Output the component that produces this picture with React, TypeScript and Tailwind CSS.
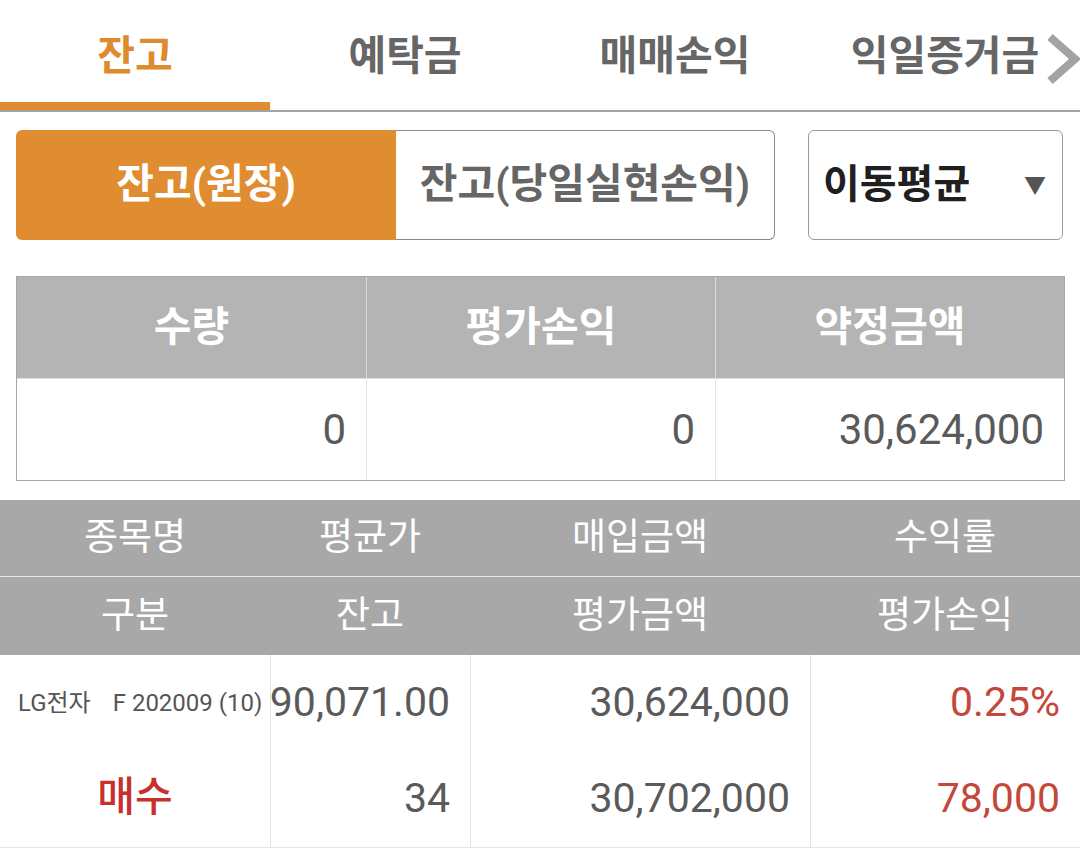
import React from "react";

const TABS = ["잔고", "예탁금", "매매손익", "익일증거금"];

const SUMMARY = [
  { label: "수량", value: "0" },
  { label: "평가손익", value: "0" },
  { label: "약정금액", value: "30,624,000" },
];

const COLS = "grid grid-cols-[270px_200px_340px_270px]";

export default function App() {
  return (
    <div className="w-[1080px] h-[856px] overflow-hidden bg-white font-['Roboto','Noto_Sans_CJK_KR',sans-serif]">
      {/* Top tabs */}
      <div className="relative flex h-[112px] border-b-2 border-[#a3a3a3]">
        {TABS.map((t, i) => (
          <div key={t} className="flex w-[270px] flex-col">
            <div
              className={
                i === 0
                  ? "flex flex-1 items-center justify-center pt-[12px] text-[41px] font-bold text-[#dc8b2e]"
                  : "flex flex-1 items-center justify-center pt-[12px] text-[41px] font-bold text-[#666666]"
              }
            >
              {t}
            </div>
            <div className={i === 0 ? "h-[8px] bg-[#df8d30]" : "h-[8px]"} />
          </div>
        ))}
        <svg
          className="absolute right-0 top-[33px] h-[52px] w-[34px]"
          viewBox="0 0 34 52"
        >
          <path d="M4 4 L29 26 L4 48" fill="none" stroke="#a3a3a3" strokeWidth="8" />
        </svg>
      </div>

      {/* Segment + dropdown */}
      <div className="mt-[18px] flex h-[110px] px-[16px]">
        <div className="flex w-[759px]">
          <div className="flex w-[380px] items-center justify-center rounded-l-[6px] bg-[#df8d30] text-[41px] font-bold text-white">
            잔고(원장)
          </div>
          <div className="flex flex-1 items-center justify-center rounded-r-[6px] border border-l-0 border-[#8a8a8a] text-[41px] font-semibold text-[#666666]">
            잔고(당일실현손익)
          </div>
        </div>
        <div className="ml-[33px] flex w-[255px] items-center justify-between rounded-[6px] border border-[#9a9a9a] pl-[14px] pr-[16px]">
          <span className="text-[40px] font-bold text-[#1f1f1f]">이동평균</span>
          <span className="text-[22px] text-[#555555]">▼</span>
        </div>
      </div>

      {/* Summary table */}
      <div className="ml-[16px] mt-[36px] w-[1049px] border border-[#a6a6a6]">
        <div className="grid h-[101px] grid-cols-3 bg-[#b4b4b4]">
          {SUMMARY.map((s, i) => (
            <div
              key={s.label}
              className={
                i === 0
                  ? "flex items-center justify-center text-[41px] font-bold text-white"
                  : "flex items-center justify-center border-l border-[#dadada] text-[41px] font-bold text-white"
              }
            >
              {s.label}
            </div>
          ))}
        </div>
        <div className="grid h-[102px] grid-cols-3 border-t border-[#e0e0e0]">
          {SUMMARY.map((s, i) => (
            <div
              key={s.label}
              className={
                i === 0
                  ? "flex items-center justify-end pr-[20px] text-[42px] text-[#5a5a5a]"
                  : "flex items-center justify-end border-l border-[#e3e3e3] pr-[20px] text-[42px] text-[#5a5a5a]"
              }
            >
              {s.value}
            </div>
          ))}
        </div>
      </div>

      {/* Detail table header */}
      <div className="mt-[19px] bg-[#a8a8a8] text-[37px] text-white">
        <div className={`${COLS} h-[76px] items-center text-center`}>
          <div>종목명</div>
          <div>평균가</div>
          <div>매입금액</div>
          <div>수익률</div>
        </div>
        <div className="h-px bg-[#e8e8e8]" />
        <div className={`${COLS} h-[78px] items-center text-center`}>
          <div>구분</div>
          <div>잔고</div>
          <div>평가금액</div>
          <div>평가손익</div>
        </div>
      </div>

      {/* Detail table body */}
      <div className={`${COLS} border-b border-[#e6e6e6] text-[41px] text-[#5a5a5a]`}>
        <div className="flex h-[95px] items-center pl-[18px] text-[24px] text-[#555555]">
          <span>LG전자</span>
          <span className="ml-[22px]">F 202009 (10)</span>
        </div>
        <div className="flex h-[95px] items-center justify-end border-l border-[#e3e3e3] pr-[20px]">
          90,071.00
        </div>
        <div className="flex h-[95px] items-center justify-end border-l border-[#e3e3e3] pr-[20px]">
          30,624,000
        </div>
        <div className="flex h-[95px] items-center justify-end border-l border-[#e3e3e3] pr-[20px] text-[#c4473b]">
          0.25%
        </div>

        <div className="flex h-[97px] items-center justify-center pb-[2px] font-medium text-[#c8302e]">
          매수
        </div>
        <div className="flex h-[97px] items-center justify-end border-l border-[#e3e3e3] pr-[20px]">
          34
        </div>
        <div className="flex h-[97px] items-center justify-end border-l border-[#e3e3e3] pr-[20px]">
          30,702,000
        </div>
        <div className="flex h-[97px] items-center justify-end border-l border-[#e3e3e3] pr-[20px] text-[#c4473b]">
          78,000
        </div>
      </div>
    </div>
  );
}
